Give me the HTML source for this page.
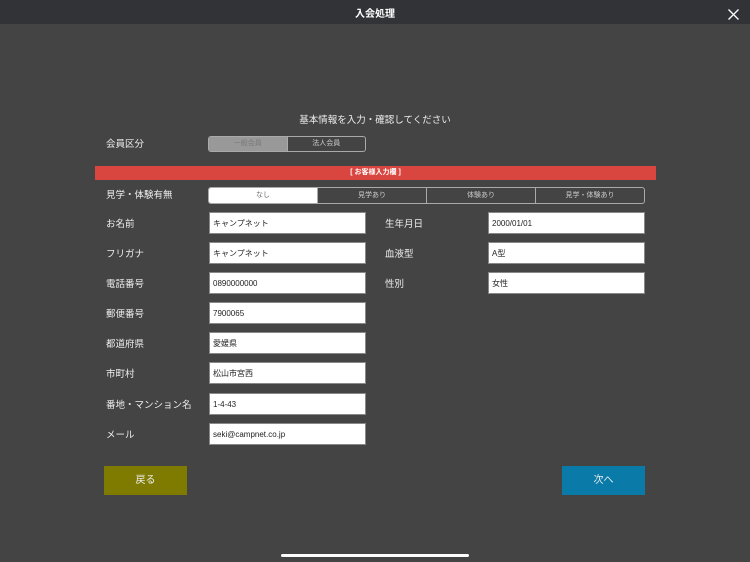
<!DOCTYPE html>
<html><head><meta charset="utf-8"><style>
*{margin:0;padding:0;box-sizing:border-box}
body{width:750px;height:562px;background:#444;position:relative;overflow:hidden;font-family:"Liberation Sans","Noto Sans CJK JP",sans-serif;color:#fff}
.a{position:absolute}
.hdr{left:0;top:0;width:750px;height:24px;background:#323337;text-align:center;font-size:10px;line-height:30px;font-weight:bold}
.lbl{font-size:9.5px;color:#eee;line-height:14px}
.in{background:#fff;border:1px solid #888;width:157px;height:22px;color:#222;font-size:8px;line-height:22px;padding-left:3px}
.seg{display:flex;border:1px solid #aaa;border-radius:3px;overflow:hidden}
.seg div{flex:1;text-align:center;font-size:7px;color:#ccc;border-left:1px solid #aaa}
.seg div:first-child{border-left:none}
</style></head><body>
<div class="a hdr">入会処理</div>
<svg class="a" style="left:728px;top:9px" width="11" height="11" viewBox="0 0 11 11"><path d="M0.5 0.5L10.5 10.5M10.5 0.5L0.5 10.5" stroke="#fff" stroke-width="1.3"/></svg>
<div class="a" style="left:0;top:112px;width:750px;text-align:center;font-size:9.5px;color:#eee">基本情報を入力・確認してください</div>
<div class="a lbl" style="left:106px;top:138px">会員区分</div>
<div class="a seg" style="left:208px;top:136px;width:158px;height:16px"><div style="background:#999;color:#777;line-height:14px">一般会員</div><div style="line-height:14px">法人会員</div></div>
<div class="a" style="left:95px;top:166px;width:561px;height:14px;background:#d9463f;text-align:center;font-size:7px;line-height:14px;font-weight:bold">[ お客様入力欄 ]</div>
<div class="a lbl" style="left:106px;top:189px">見学・体験有無</div>
<div class="a seg" style="left:208px;top:187px;width:437px;height:17px"><div style="background:#fff;color:#666;line-height:15px">なし</div><div style="line-height:15px">見学あり</div><div style="line-height:15px">体験あり</div><div style="line-height:15px">見学・体験あり</div></div>

<div class="a lbl" style="left:106px;top:218px">お名前</div><div class="a in" style="left:209px;top:212px">キャンプネット</div>
<div class="a lbl" style="left:106px;top:248px">フリガナ</div><div class="a in" style="left:209px;top:242px">キャンプネット</div>
<div class="a lbl" style="left:106px;top:278px">電話番号</div><div class="a in" style="left:209px;top:272px">0890000000</div>
<div class="a lbl" style="left:106px;top:308px">郵便番号</div><div class="a in" style="left:209px;top:302px">7900065</div>
<div class="a lbl" style="left:106px;top:338px">都道府県</div><div class="a in" style="left:209px;top:332px">愛媛県</div>
<div class="a lbl" style="left:106px;top:368px">市町村</div><div class="a in" style="left:209px;top:362px">松山市宮西</div>
<div class="a lbl" style="left:106px;top:399px">番地・マンション名</div><div class="a in" style="left:209px;top:393px">1-4-43</div>
<div class="a lbl" style="left:106px;top:429px">メール</div><div class="a in" style="left:209px;top:423px">seki@campnet.co.jp</div>

<div class="a lbl" style="left:385px;top:218px">生年月日</div><div class="a in" style="left:488px;top:212px">2000/01/01</div>
<div class="a lbl" style="left:385px;top:248px">血液型</div><div class="a in" style="left:488px;top:242px">A型</div>
<div class="a lbl" style="left:385px;top:278px">性別</div><div class="a in" style="left:488px;top:272px">女性</div>

<div class="a" style="left:104px;top:466px;width:83px;height:29px;background:#7f7a00;text-align:center;line-height:30px;font-size:10px;color:#eee">戻る</div>
<div class="a" style="left:562px;top:466px;width:83px;height:29px;background:#0a7aa8;text-align:center;line-height:30px;font-size:10px;color:#eee">次へ</div>
<div class="a" style="left:281px;top:554px;width:188px;height:3px;background:#fff;border-radius:2px"></div>
</body></html>
